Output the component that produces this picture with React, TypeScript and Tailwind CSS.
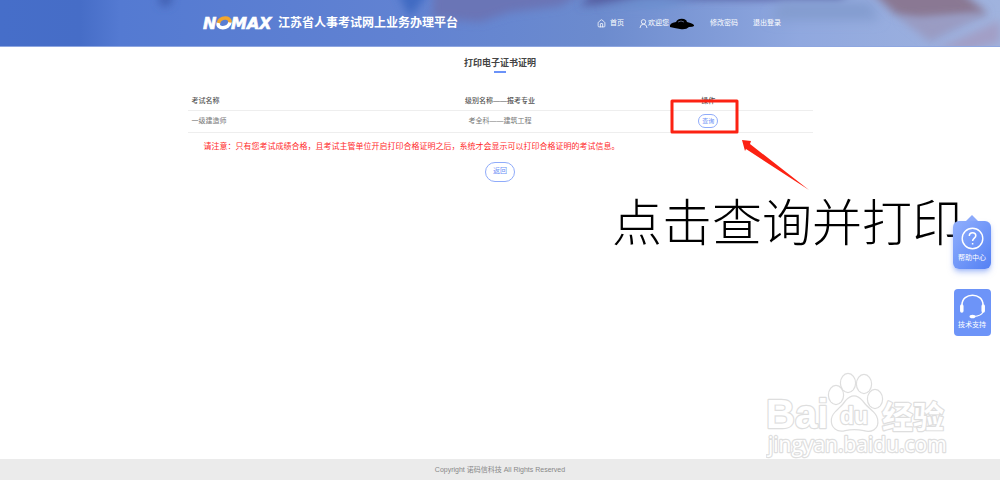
import { House } from 'lucide-react';

const navItem = 'flex items-center gap-1 hover:underline';

function HeaderBackdrop() {
  return (
    <svg className="absolute inset-0 -z-10 h-full w-full" viewBox="0 0 1000 47" preserveAspectRatio="none" aria-hidden="true">
      <defs>
        <linearGradient id="sky" x1="0" x2="1" y1="0" y2="0">
          <stop offset="0" stopColor="#466ec9" />
          <stop offset="0.08" stopColor="#466dc7" />
          <stop offset="0.12" stopColor="#547ad2" />
          <stop offset="0.4" stopColor="#6182d2" />
          <stop offset="0.6" stopColor="#6c8bce" />
          <stop offset="0.8" stopColor="#90a8df" />
          <stop offset="1" stopColor="#a0b3de" />
        </linearGradient>
        <filter id="soft" filterUnits="userSpaceOnUse" x="-50" y="-50" width="1100" height="150">
          <feGaussianBlur stdDeviation="6" />
        </filter>
        <filter id="softer" filterUnits="userSpaceOnUse" x="-50" y="-50" width="1100" height="150">
          <feGaussianBlur stdDeviation="4" />
        </filter>
      </defs>
      <rect width="1000" height="47" fill="url(#sky)" />
      <path d="M158 -8H174L170 6H160Z" fill="#4362b4" filter="url(#softer)" />
      <path d="M396 -10H430L410 18Z" fill="#3f6ac2" filter="url(#softer)" />
      <path d="M434 -12H590L560 6L510 12L480 22L432 18Z" fill="#6a75b6" filter="url(#softer)" />
      <path d="M580 6L600 -16H860L840 0L660 -1Z" fill="#555da0" filter="url(#softer)" />
      <path d="M600 8L640 -2H700L660 8Z" fill="#6c90d0" filter="url(#softer)" />
      <path d="M780 2H870L880 20H770Z" fill="#839ccf" filter="url(#soft)" />
      <path d="M868 -12H958L988 14L920 22L895 14Z" fill="#8a7893" filter="url(#softer)" />
      <path d="M900 18L985 14L950 32L930 42Z" fill="#9a9bc2" filter="url(#softer)" />
      <path d="M935 50L1000 20V42L970 50Z" fill="#a29fc6" filter="url(#softer)" />
      <rect y="46" width="1000" height="1" fill="#8ea6e0" />
    </svg>
  );
}

function Logo() {
  return (
    <svg className="h-6 w-[74px]" viewBox="0 0 74 24" role="img" aria-label="NOMAX">
      <g fill="#fff" stroke="#fff" strokeWidth="0.600" fontFamily="'DejaVu Sans', sans-serif" fontWeight="700" fontStyle="italic" fontSize="16">
        <text x="1" y="17">N</text>
        <text x="29" y="17">MAX</text>
      </g>
      <path d="M16.500 10.500C14 17.500 27 17.500 28 10" fill="none" stroke="#fff" strokeWidth="3.600" />
      <path d="M16.500 11C18 4.500 29 4.500 28 10.500" fill="none" stroke="#f3a52c" strokeWidth="3.600" />
    </svg>
  );
}

function Header() {
  return (
    <header className="relative isolate overflow-hidden">
      <HeaderBackdrop />
      <div className="mx-auto flex h-[47px] w-3/5 items-center justify-between text-white">
        <div className="flex items-center gap-[2px] pl-[2px]">
          <Logo />
          <span className="whitespace-nowrap pb-[2px] text-[12px] font-bold leading-4">江苏省人事考试网上业务办理平台</span>
        </div>
        <nav className="flex items-center gap-[15px] whitespace-nowrap pr-[19px] text-[7px]">
          <a href="#home" className={navItem}>
            <House size={9} strokeWidth={2} />
            首页
          </a>
          <a href="#user" className="flex items-center">
            <svg className="h-[9px] w-[9px]" viewBox="0 0 9 9" fill="none" stroke="#fff" strokeWidth="0.800" aria-hidden="true">
              <circle cx="4.500" cy="2.800" r="2.200" />
              <path d="M1 9Q1 5.500 4.500 5.200Q8 5.500 8 9" />
            </svg>
            欢迎您
            <svg className="h-3 w-[26px]" viewBox="0 0 26 12" aria-hidden="true">
              <path d="M1 9Q0 5 7 4Q9 0 15 1Q18 2 18 4Q26 6 25 8Q24 9 20 9Q17 12 11 11Q5 10 1 9Z" />
              <path d="M9 4Q12 2 15 4" fill="none" stroke="#8a98c8" strokeWidth="0.600" />
            </svg>
          </a>
          <a href="#password" className="hover:underline">修改密码</a>
          <a href="#logout" className="hover:underline">退出登录</a>
        </nav>
      </div>
    </header>
  );
}

function ExamTable() {
  return (
    <table className="w-full table-fixed text-center text-[7px] leading-4 text-[#777]">
      <thead>
        <tr className="h-5 border-b border-[#eee] text-[#555]">
          <th className="w-1/3 pl-1 pt-[2px] text-left font-medium">考试名称</th>
          <th className="w-1/3 pt-[2px] font-medium">级别名称——报考专业</th>
          <th className="w-1/3 pt-[2px] font-medium">操作</th>
        </tr>
      </thead>
      <tbody>
        <tr className="h-[22px] border-b border-[#eee]">
          <td className="pl-1 text-left">一级建造师</td>
          <td>考全科——建筑工程</td>
          <td>
            <button type="button" className="h-[14px] w-5 rounded-full border border-[#8fabfa] text-[6px] leading-3 text-[#6b8ff5]">查询</button>
          </td>
        </tr>
      </tbody>
    </table>
  );
}

function Annotation() {
  return (
    <div className="pointer-events-none absolute left-[calc(50%+112px)] top-[98px]">
      <svg className="h-[96px] w-[200px]" viewBox="0 0 200 96" aria-hidden="true">
        <rect x="60" y="3" width="65" height="31" fill="none" stroke="#fc2213" strokeWidth="3" strokeLinejoin="round" />
        <path d="M130 42L139 43L138 46L197 92L134 51L133 53Z" fill="#fc2213" />
      </svg>
      <p className="whitespace-nowrap text-[50px] font-light leading-[60px] text-black">点击查询并打印</p>
    </div>
  );
}

function SideTools() {
  return (
    <aside className="absolute right-[9px] top-[215px] flex flex-col items-center gap-5 text-[7px] text-white">
      <a href="#help" className="flex flex-col items-center">
        <svg className="h-[6px] w-3" viewBox="0 0 12 6" aria-hidden="true">
          <path d="M0 6L6 0L12 6Z" fill="#8caafb" />
        </svg>
        <span className="flex h-12 w-[38px] flex-col items-center gap-[2px] rounded-md bg-linear-to-br from-[#91affd] to-[#5480f3] pt-[6px] shadow-md shadow-[#6d92f5]/50">
          <svg className="h-[23px] w-[23px]" viewBox="0 0 23 23" fill="none" stroke="#fff" aria-hidden="true">
            <circle cx="11.500" cy="11.500" r="10.300" strokeWidth="1.400" />
            <path d="M8.300 9C8.300 4.500 14.800 4.800 14.800 8.700C14.800 11 11.600 11.200 11.600 14M11.600 16V17.500" strokeWidth="1.500" />
          </svg>
          <span className="leading-3">帮助中心</span>
        </span>
      </a>
      <a href="#support" className="flex h-[47px] w-[37px] flex-col items-center rounded-sm bg-[#6d94f8] pt-[5px]">
        <svg className="h-[25px] w-[27px]" viewBox="0 0 27 25" fill="none" stroke="#fff" aria-hidden="true">
          <path d="M3 14V11C3 -2 24 -2 24 11V14" strokeWidth="1.500" />
          <path d="M2.800 12V17M24.200 12V17" strokeWidth="3.500" strokeLinecap="round" />
          <path d="M24 18Q22 22 15 22.500" strokeWidth="1.200" />
          <ellipse cx="13.500" cy="22.500" rx="3" ry="1.800" fill="#fff" stroke="none" />
        </svg>
        <span className="leading-3">技术支持</span>
      </a>
    </aside>
  );
}

function Watermark() {
  return (
    <svg className="pointer-events-none absolute bottom-[18px] right-[50px] h-[92px] w-[184px]" viewBox="0 0 184 92" aria-hidden="true">
      <g fill="#fff" stroke="#dedede" strokeWidth="2.400" strokeLinejoin="round" fontFamily="'Liberation Sans', 'Noto Sans CJK SC', sans-serif" fontWeight="700" style={{ paintOrder: 'stroke' }}>
        <text x="0" y="58" fontSize="40">Bai</text>
        <text x="116" y="58" fontSize="31">经验</text>
        <text x="2" y="82" fontSize="21" fontWeight="400" fontFamily="'Open Sans', sans-serif">jingyan.baidu.com</text>
        <ellipse cx="70" cy="25" rx="7" ry="9" />
        <ellipse cx="82" cy="13" rx="7" ry="9" />
        <ellipse cx="98" cy="14" rx="7" ry="9" />
        <ellipse cx="109" cy="29" rx="7" ry="9" />
        <path d="M66 49C67 42 75 39 80 31Q88 22 96 31C102 40 109 41 111 49C113 60 104 62 98 60Q88 58 79 60C72 62 65 58 66 49Z" />
        <text x="74" y="54" fontSize="23">du</text>
      </g>
    </svg>
  );
}

export default function App() {
  return (
    <div className="relative flex min-h-screen flex-col overflow-hidden bg-white font-['Liberation_Sans','Noto_Sans_CJK_SC',sans-serif]">
      <Header />
      <main className="mx-auto flex w-5/8 flex-1 flex-col items-center pt-2">
        <h1 className="text-[9px] font-bold leading-4 text-[#444]">打印电子证书证明</h1>
        <div className="mb-[17px] h-[2px] w-3 bg-[#6b92f8]" />
        <ExamTable />
        <p className="w-full pl-4 pt-[6px] text-[8px] leading-4 text-[#ff2a2a]">
          请注意：只有您考试成绩合格，且考试主管单位开启打印合格证明之后，系统才会显示可以打印合格证明的考试信息。
        </p>
        <button type="button" className="mt-[7px] h-5 w-[30px] rounded-full border border-[#8fabfa] text-[7px] text-[#6b8ff5]">返回</button>
      </main>
      <footer className="bg-[#ebebeb] text-center text-[7px] leading-[21px] text-[#888]">Copyright 诺码信科技 All Rights Reserved</footer>
      <Annotation />
      <Watermark />
      <SideTools />
    </div>
  );
}
